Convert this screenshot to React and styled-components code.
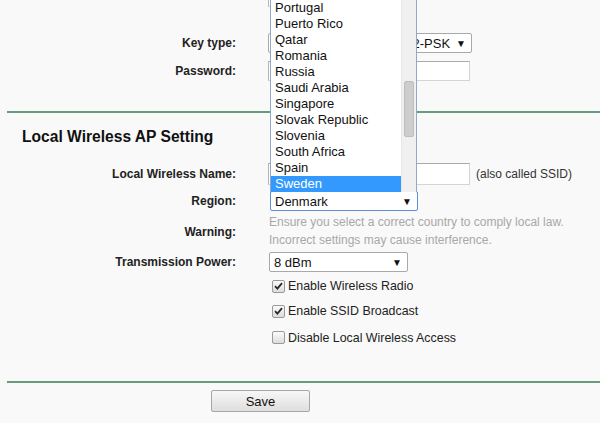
import React from "react";
import styled, { createGlobalStyle } from "styled-components";

const Global = createGlobalStyle`
  html, body { margin: 0; padding: 0; background: #f9f9f9; overflow: hidden; }
  body { font-family: "Liberation Sans", Arial, sans-serif; color: #222; }
`;

const Page = styled.div`
  width: 600px;
  height: 423px;
  overflow: hidden;
  background: #f9f9f9;
  padding-left: 7px;
  box-sizing: border-box;
`;

const Section = styled.section`
  padding-top: ${(p) => p.$pt || 0}px;
  padding-bottom: ${(p) => p.$pb || 0}px;
  margin-top: ${(p) => p.$mt || 0}px;
  border-bottom: ${(p) => (p.$line ? "2px solid #6a9a7c" : "none")};
`;

const Heading = styled.h2`
  margin: 0 0 13px 15px;
  font-size: 15.6px;
  line-height: 20px;
  font-weight: bold;
  color: #111;
`;

const Row = styled.div`
  display: grid;
  grid-template-columns: 229px 1fr;
  column-gap: 32px;
  align-items: center;
  height: ${(p) => p.$h}px;
  margin-bottom: ${(p) => p.$mb || 0}px;
`;

const Label = styled.div`
  text-align: right;
  font-weight: bold;
  font-size: 12px;
  color: #222;
`;

const Value = styled.div`
  display: flex;
  align-items: center;
  gap: 6px;
`;

const TextInput = styled.div`
  width: ${(p) => p.$w || 202}px;
  height: ${(p) => p.$h || 20}px;
  box-sizing: border-box;
  background: #fff;
  border: 1px solid #d4d4d4;
  border-top-color: #a9a9a9;
  border-left-color: #b5b5b5;
`;

const Note = styled.span`
  font-size: 12px;
  color: #333;
`;

const Select = styled.div`
  position: relative;
  width: ${(p) => p.$w}px;
  height: 20px;
  margin-left: ${(p) => p.$ml || 0}px;
  box-sizing: border-box;
  background: #fff;
  border: 1px solid ${(p) => (p.$focus ? "#5b8fd6" : "#a9a9a9")};
  border-radius: 2px;
  display: flex;
  align-items: center;
  padding: 0 5px 0 4px;
  font-size: 13px;
  color: #111;
`;

const SelectText = styled.span`
  flex: 1;
  text-align: ${(p) => p.$align || "left"};
  white-space: nowrap;
  overflow: hidden;
`;

const Arrow = styled.span`
  font-size: 10px;
  margin-left: 6px;
  color: #111;
`;

const Warning = styled.div`
  font-size: 12px;
  line-height: 18px;
  color: #a8a8a8;
  margin-left: 1px;
  margin-top: -2px;
`;

const CheckRow = styled.label`
  display: flex;
  align-items: center;
  gap: 3px;
  margin-left: 4px;
  font-size: 12.4px;
  color: #222;
`;

const Box = styled.span`
  width: 13px;
  height: 13px;
  box-sizing: border-box;
  border: 1px solid #9a9a9a;
  border-radius: 2px;
  background: linear-gradient(#fbfbfb, #dcdcdc);
  display: flex;
  align-items: center;
  justify-content: center;
`;

const DropList = styled.div`
  position: absolute;
  left: -1px;
  bottom: 100%;
  width: 147px;
  box-sizing: border-box;
  background: #fff;
  border: 1px solid #8fa9c9;
  border-top: none;
  border-bottom: none;
  display: flex;
  z-index: 10;
`;

const Items = styled.ul`
  list-style: none;
  margin: 0;
  padding: 0;
  flex: 1;
`;

const Item = styled.li`
  height: 16px;
  line-height: 16px;
  padding-left: 4px;
  font-size: 13px;
  color: ${(p) => (p.$sel ? "#fff" : "#111")};
  background: ${(p) => (p.$sel ? "#3399ff" : "transparent")};
  white-space: nowrap;
`;

const Track = styled.div`
  width: 14px;
  background: #f0f0f0;
  border-left: 1px solid #e6e6e6;
  display: flex;
  justify-content: center;
`;

const Thumb = styled.div`
  width: 8px;
  height: 54px;
  margin-top: 81px;
  background: #cdcdcd;
  border: 1px solid #bdbdbd;
  border-radius: 2px;
`;

const ButtonBar = styled.div`
  padding: 7px 0 0 204px;
`;

const Button = styled.button`
  width: 99px;
  height: 22px;
  font-family: "Liberation Sans", Arial, sans-serif;
  font-size: 13px;
  color: #111;
  border: 1px solid #a7a7a7;
  border-radius: 2px;
  background: linear-gradient(#f7f7f7, #dedede);
  padding: 0;
`;

const Check = () => (
  <svg width="9" height="8" viewBox="0 0 9 8">
    <path d="M1 4.2 L3.4 6.6 L8 1.2" fill="none" stroke="#2b2b2b" strokeWidth="1.8" />
  </svg>
);

const countries = [
  "Portugal",
  "Puerto Rico",
  "Qatar",
  "Romania",
  "Russia",
  "Saudi Arabia",
  "Singapore",
  "Slovak Republic",
  "Slovenia",
  "South Africa",
  "Spain",
  "Sweden",
];

export default function App() {
  return (
    <Page>
      <Global />
      <Section $mt={-17} $pb={26} $line>
        <Row $h={28} $mb={18}>
          <Label />
          <Value>
            <TextInput $w={120} />
          </Value>
        </Row>
        <Row $h={28}>
          <Label>Key type:</Label>
          <Value>
            <Select $w={204}>
              <SelectText $align="right">WPA-PSK/WPA2-PSK</SelectText>
              <Arrow>▼</Arrow>
            </Select>
          </Value>
        </Row>
        <Row $h={28}>
          <Label>Password:</Label>
          <Value>
            <TextInput />
          </Value>
        </Row>
      </Section>

      <Section $pt={14} $pb={30} $line>
        <Heading>Local Wireless AP Setting</Heading>
        <Row $h={28}>
          <Label>Local Wireless Name:</Label>
          <Value>
            <TextInput $h={22} />
            <Note>(also called SSID)</Note>
          </Value>
        </Row>
        <Row $h={26}>
          <Label>Region:</Label>
          <Value>
            <Select $w={148} $ml={2} $focus>
              <DropList>
                <Items>
                  {countries.map((c) => (
                    <Item key={c} $sel={c === "Sweden"}>
                      {c}
                    </Item>
                  ))}
                </Items>
                <Track>
                  <Thumb />
                </Track>
              </DropList>
              <SelectText>Denmark</SelectText>
              <Arrow>▼</Arrow>
            </Select>
          </Value>
        </Row>
        <Row $h={36}>
          <Label>Warning:</Label>
          <Warning>
            Ensure you select a correct country to comply local law.
            <br />
            Incorrect settings may cause interference.
          </Warning>
        </Row>
        <Row $h={24}>
          <Label>Transmission Power:</Label>
          <Value>
            <Select $w={139} $ml={1}>
              <SelectText>8 dBm</SelectText>
              <Arrow>▼</Arrow>
            </Select>
          </Value>
        </Row>
        <Row $h={24}>
          <Label />
          <CheckRow>
            <Box>
              <Check />
            </Box>
            Enable Wireless Radio
          </CheckRow>
        </Row>
        <Row $h={26}>
          <Label />
          <CheckRow>
            <Box>
              <Check />
            </Box>
            Enable SSID Broadcast
          </CheckRow>
        </Row>
        <Row $h={27}>
          <Label />
          <CheckRow>
            <Box />
            Disable Local Wireless Access
          </CheckRow>
        </Row>
      </Section>

      <ButtonBar>
        <Button>Save</Button>
      </ButtonBar>
    </Page>
  );
}
